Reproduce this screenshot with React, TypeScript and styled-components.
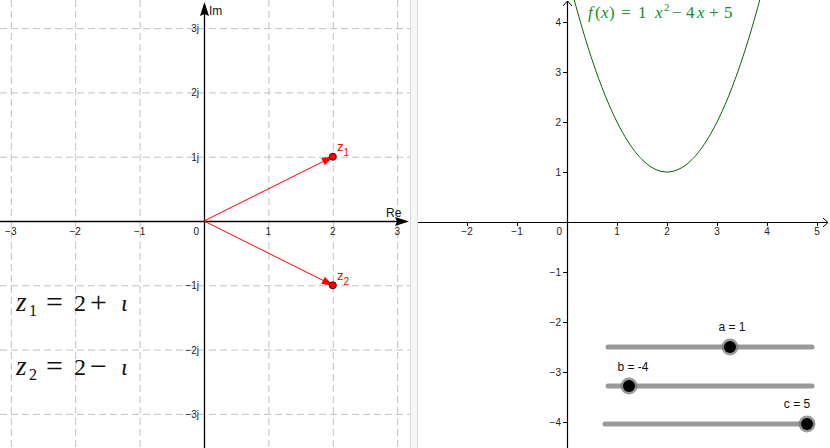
import React from "react";
import styled, { createGlobalStyle } from "styled-components";

const GlobalStyle = createGlobalStyle`
  html, body {
    margin: 0;
    padding: 0;
    background: #ffffff;
    overflow: hidden;
  }
`;

const LABEL_FONT = `"Liberation Sans", Arial, sans-serif`;
const MATH_FONT = `"Liberation Serif", "Times New Roman", serif`;

// complex plane view
const L = { ox: 204, oy: 221, ux: 64.4, uy: 64.3 };
// function view
const R = { ox: 567, oy: 222, u: 50 };

const Applet = styled.div`
  display: flex;
  width: 830px;
  height: 448px;
  background: #ffffff;
  font-family: ${LABEL_FONT};
`;

const GraphicsView = styled.div<{ $width: number }>`
  flex: 0 0 ${(p) => p.$width}px;
  height: 448px;
  overflow: hidden;

  svg {
    display: block;
  }
`;

const Splitter = styled.div`
  flex: 0 0 6px;
  height: 448px;
  background: #f6f6f6;
  border-left: 1px solid #dcdcdc;
  border-right: 1px solid #dcdcdc;
`;

const AxisLabel = styled.text`
  font-family: ${LABEL_FONT};
  font-size: 10px;
  fill: #222;
`;

const AxisName = styled.text`
  font-family: ${LABEL_FONT};
  font-size: 12px;
  fill: #111;
`;

const MathText = styled.text<{ $size: number; $color: string }>`
  font-family: ${MATH_FONT};
  font-size: ${(p) => p.$size}px;
  fill: ${(p) => p.$color};
`;

const PointLabel = styled.text`
  font-family: ${LABEL_FONT};
  font-size: 13px;
  fill: #ff0000;
`;

const SliderLabel = styled.text`
  font-family: ${LABEL_FONT};
  font-size: 12px;
  fill: #111;
`;

const minus = (n: number) => (n < 0 ? `\u2212${-n}` : `${n}`);

const ComplexPlane = () => {
  const xs = [-3, -2, -1, 1, 2, 3];
  const ys = [3, 2, 1, -1, -2, -3];
  const px = (v: number) => L.ox + v * L.ux;
  const py = (v: number) => L.oy - v * L.uy;

  return (
    <svg width={410} height={448} viewBox="0 0 410 448">
      <defs>
        <marker id="redHead" markerWidth="12" markerHeight="8" refX="11" refY="4" orient="auto" markerUnits="userSpaceOnUse">
          <path d="M0,0 L12,4 L0,8 Z" fill="#ff0000" />
        </marker>
      </defs>
      <g stroke="#c0c0c0" strokeWidth={1} strokeDasharray="7 4">
        {xs.map((v) => (
          <line key={`gx${v}`} x1={px(v) + 0.5} y1={0} x2={px(v) + 0.5} y2={448} />
        ))}
        {ys.map((v) => (
          <line key={`gy${v}`} x1={0} y1={py(v) + 0.5} x2={410} y2={py(v) + 0.5} />
        ))}
      </g>

      {/* axes */}
      <line x1={0} y1={L.oy + 0.5} x2={400} y2={L.oy + 0.5} stroke="#000" strokeWidth={1.3} />
      <path d={`M409,${L.oy + 0.5} L395,${L.oy - 4} L397,${L.oy + 0.5} L395,${L.oy + 5} Z`} fill="#000" />
      <line x1={L.ox + 0.5} y1={10} x2={L.ox + 0.5} y2={448} stroke="#000" strokeWidth={1.3} />
      <path d={`M${L.ox + 0.5},2 L${L.ox - 4},16 L${L.ox + 0.5},14 L${L.ox + 5},16 Z`} fill="#000" />
      <AxisName x={386} y={217}>Re</AxisName>
      <AxisName x={209} y={15}>Im</AxisName>

      {xs.map((v) => (
        <AxisLabel key={`lx${v}`} x={px(v)} y={235} textAnchor="middle">
          {minus(v)}
        </AxisLabel>
      ))}
      <AxisLabel x={199} y={235} textAnchor="end">0</AxisLabel>
      {ys.map((v) => (
        <AxisLabel key={`ly${v}`} x={199} y={py(v) + 4} textAnchor="end">
          {minus(v)}j
        </AxisLabel>
      ))}

      {/* vectors z1, z2 */}
      <line x1={L.ox} y1={L.oy} x2={px(2)} y2={py(1)} stroke="#ff0000" strokeWidth={1} markerEnd="url(#redHead)" />
      <line x1={L.ox} y1={L.oy} x2={px(2)} y2={py(-1)} stroke="#ff0000" strokeWidth={1} markerEnd="url(#redHead)" />
      <circle cx={px(2)} cy={py(1)} r={3.5} fill="#ff0000" stroke="#400000" strokeWidth={1} />
      <circle cx={px(2)} cy={py(-1)} r={3.5} fill="#ff0000" stroke="#400000" strokeWidth={1} />
      <PointLabel x={337} y={151}>
        z<tspan fontSize={10} dy={5}>1</tspan>
      </PointLabel>
      <PointLabel x={337} y={280}>
        z<tspan fontSize={10} dy={5}>2</tspan>
      </PointLabel>

      {/* formulas */}
      {[
        { y: 311, sub: "1", op: "+" },
        { y: 375, sub: "2", op: "\u2212" },
      ].map((f) => (
        <MathText key={f.sub} $size={24} $color="#111" y={f.y}>
          <tspan x={16} fontStyle="italic" fontSize={27}>z</tspan>
          <tspan x={29} dy={5} fontSize={16}>{f.sub}</tspan>
          <tspan x={46} dy={-4} fontSize={30}>=</tspan>
          <tspan x={74} dy={-1}>2</tspan>
          <tspan x={90} dy={1} fontSize={30}>{f.op}</tspan>
          <tspan x={121} dy={-1} fontStyle="italic">ι</tspan>
        </MathText>
      ))}
    </svg>
  );
};

type SliderProps = { name: string; value: number; x1: number; x2: number; y: number; knob: number; lx: number; ly: number };

const sliders: SliderProps[] = [
  { name: "a", value: 1, x1: 608, x2: 812, y: 347, knob: 730, lx: 732, ly: 331 },
  { name: "b", value: -4, x1: 608, x2: 812, y: 386, knob: 629, lx: 633, ly: 371 },
  { name: "c", value: 5, x1: 605, x2: 812, y: 424, knob: 807, lx: 797, ly: 408 },
];

const Slider = ({ name, value, x1, x2, y, knob, lx, ly }: SliderProps) => (
  <g>
    <line x1={x1} y1={y} x2={x2} y2={y} stroke="#999999" strokeWidth={5} strokeLinecap="round" />
    <circle cx={knob} cy={y} r={8.5} fill="#7a7a7a" fillOpacity={0.75} />
    <circle cx={knob} cy={y} r={6} fill="#000" />
    <SliderLabel x={lx} y={ly} textAnchor="middle">
      {name} = {value}
    </SliderLabel>
  </g>
);

const FunctionView = () => {
  const xs = [-2, -1, 1, 2, 3, 4, 5];
  const ys = [4, 3, 2, 1, -1, -2, -3, -4];
  const px = (v: number) => R.ox + v * R.u;
  const py = (v: number) => R.oy - v * R.u;

  const f = (x: number) => x * x - 4 * x + 5;
  const pts: string[] = [];
  for (let x = 0.1; x <= 3.9; x += 0.02) {
    pts.push(`${px(x).toFixed(2)},${py(f(x)).toFixed(2)}`);
  }

  return (
    <svg width={412} height={448} viewBox="418 0 412 448">
      {/* axes */}
      <line x1={418} y1={R.oy + 0.5} x2={828} y2={R.oy + 0.5} stroke="#000" strokeWidth={1.2} />
      <path d={`M823,${R.oy - 4} L828,${R.oy + 0.5} L823,${R.oy + 5}`} fill="none" stroke="#000" strokeWidth={1} />
      <line x1={R.ox + 0.5} y1={1} x2={R.ox + 0.5} y2={448} stroke="#000" strokeWidth={1.2} />
      <path d={`M${R.ox - 4},6 L${R.ox + 0.5},1 L${R.ox + 5},6`} fill="none" stroke="#000" strokeWidth={1} />

      {xs.map((v) => (
        <g key={`tx${v}`}>
          <line x1={px(v) + 0.5} y1={R.oy} x2={px(v) + 0.5} y2={R.oy + 4} stroke="#000" />
          <AxisLabel x={px(v)} y={235} textAnchor="middle">
            {minus(v)}
          </AxisLabel>
        </g>
      ))}
      <AxisLabel x={562} y={235} textAnchor="end">0</AxisLabel>
      {ys.map((v) => (
        <g key={`ty${v}`}>
          <line x1={R.ox - 4} y1={py(v) + 0.5} x2={R.ox} y2={py(v) + 0.5} stroke="#000" />
          <AxisLabel x={561} y={py(v) + 4} textAnchor="end">
            {minus(v)}
          </AxisLabel>
        </g>
      ))}

      <polyline points={pts.join(" ")} fill="none" stroke="#006400" strokeWidth={1} />
      <MathText $size={17} $color="#228b22" y={18}>
        <tspan x={588} fontStyle="italic">f</tspan>
        <tspan x={595}>(</tspan>
        <tspan x={601} fontStyle="italic">x</tspan>
        <tspan x={609}>)</tspan>
        <tspan x={621}>=</tspan>
        <tspan x={638}>1</tspan>
        <tspan x={655} fontStyle="italic">x</tspan>
        <tspan x={664} dy={-7} fontSize={11}>2</tspan>
        <tspan x={672} dy={7}>{"\u2212"}</tspan>
        <tspan x={686}>4</tspan>
        <tspan x={697} fontStyle="italic">x</tspan>
        <tspan x={709}>+</tspan>
        <tspan x={724}>5</tspan>
      </MathText>

      {sliders.map((s) => (
        <Slider key={s.name} {...s} />
      ))}
    </svg>
  );
};

export default function App() {
  return (
    <>
      <GlobalStyle />
      <Applet>
        <GraphicsView $width={410}>
          <ComplexPlane />
        </GraphicsView>
        <Splitter />
        <GraphicsView $width={412}>
          <FunctionView />
        </GraphicsView>
      </Applet>
    </>
  );
}
